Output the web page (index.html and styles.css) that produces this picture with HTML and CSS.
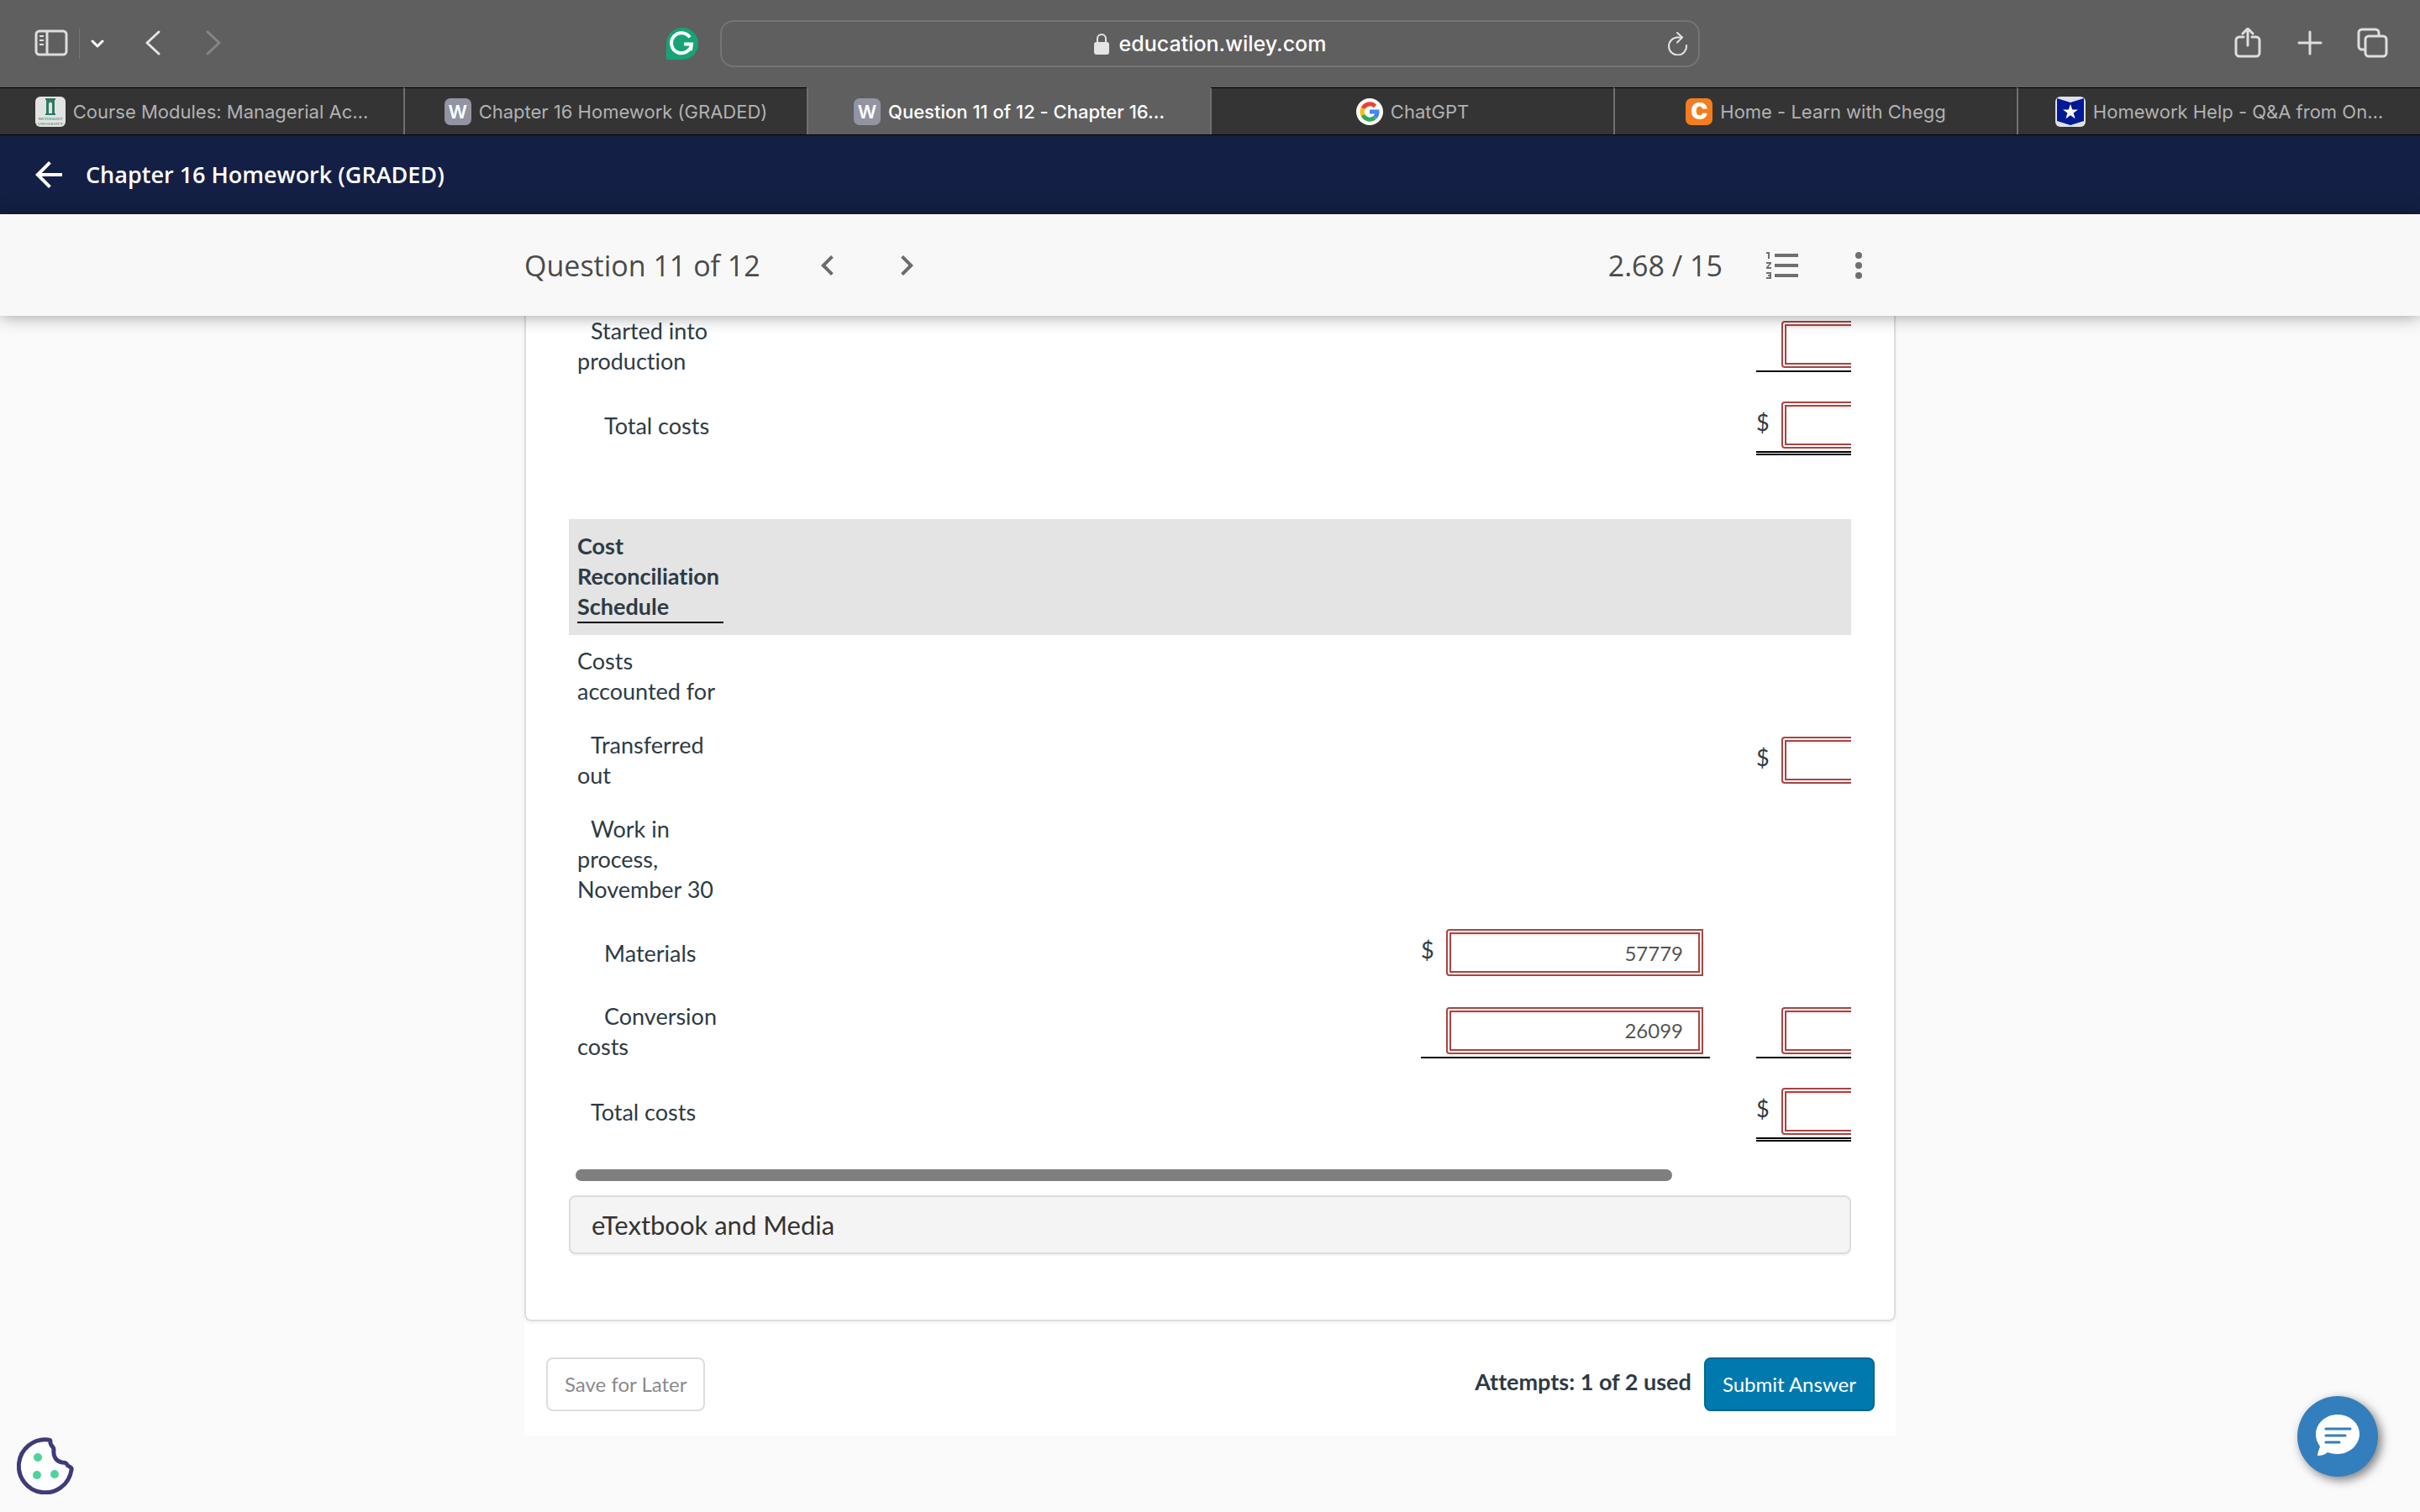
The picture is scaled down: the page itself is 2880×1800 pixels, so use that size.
FILE: index.html
```html
<!DOCTYPE html>
<html lang="en">
<head>
    <meta charset="UTF-8">
    <meta name="viewport" content="width=device-width, initial-scale=1.0">
    <title>Question 11 of 12 - Chapter 16 Homework (GRADED)</title>
    <link rel="stylesheet" href="styles.css">
</head>
<body>
    <!-- browser toolbar -->
    <div class="toolbar">
        <div class="toolbar-left">
            <button type="button" class="tool" aria-label="Sidebar">
                <svg class="icon-40" viewBox="0 0 40 40" fill="none" stroke="#dedede" stroke-width="3">
                    <rect x="2" y="5" width="36" height="28" rx="4"/>
                    <path d="M15 5v28"/>
                    <path d="M6 11h5M6 16h5M6 21h5" stroke-width="2"/>
                </svg>
            </button>
            <span class="tool-divider"></span>
            <button type="button" class="tool tool-menu" aria-label="Tab groups">
                <svg class="icon-16" viewBox="0 0 16 16" fill="none" stroke="#fff" stroke-width="3" stroke-linecap="round" stroke-linejoin="round"><path d="M2 5l6 6 6-6"/></svg>
            </button>
            <button type="button" class="tool tool-back" aria-label="Back">
                <svg class="icon-32" viewBox="0 0 32 32" fill="none" stroke="#e4e4e4" stroke-width="3" stroke-linecap="round" stroke-linejoin="round"><path d="M23 2L9 15l14 13"/></svg>
            </button>
            <button type="button" class="tool tool-forward" aria-label="Forward">
                <svg class="icon-32" viewBox="0 0 32 32" fill="none" stroke="#858585" stroke-width="3" stroke-linecap="round" stroke-linejoin="round"><path d="M9 2l14 13L9 28"/></svg>
            </button>
            <button type="button" class="tool tool-grammarly" aria-label="Grammarly">
                <svg class="icon-38" viewBox="0 0 38 38">
                    <path fill="#15a478" d="M19 0a19 19 0 1 1 0 38H0V19A19 19 0 0 1 19 0z"/>
                    <path fill="none" stroke="#fff" stroke-width="4" d="M28 11.500A12 12 0 1 0 30 19.500H21M30 19l-1 8"/>
                </svg>
            </button>
        </div>
        <div class="address">
            <svg class="lock" viewBox="0 0 18 26"><path fill="none" stroke="#e4e4e4" stroke-width="2" d="M4 12V7a5 5 0 0 1 10 0v5"/><rect x="0" y="11" width="18" height="15" rx="3" fill="#e4e4e4"/></svg>
            <span>education.wiley.com</span>
            <button type="button" class="reload" aria-label="Reload">
                <svg class="icon-28" viewBox="0 0 28 28" fill="none" stroke="#e4e4e4" stroke-width="2" stroke-linecap="round" stroke-linejoin="round"><path d="M24 16a10.500 10.500 0 1 1-10.500-9.500h5"/><path d="M13 1l6 5.500-6 6"/></svg>
            </button>
        </div>
        <div class="toolbar-right">
            <button type="button" class="tool" aria-label="Share">
                <svg class="icon-38" viewBox="0 0 38 38" fill="none" stroke="#dedede" stroke-width="3" stroke-linecap="round" stroke-linejoin="round"><path d="M14 11H9a4 4 0 0 0-4 4v15a4 4 0 0 0 4 4h20a4 4 0 0 0 4-4V15a4 4 0 0 0-4-4h-5M19 21V1M13 7l6-6 6 6"/></svg>
            </button>
            <button type="button" class="tool" aria-label="New tab">
                <svg class="icon-38" viewBox="0 0 38 38" fill="none" stroke="#dedede" stroke-width="3" stroke-linecap="round"><path d="M19 5v26M6 18h26"/></svg>
            </button>
            <button type="button" class="tool" aria-label="Tab overview">
                <svg class="icon-38" viewBox="0 0 38 38" fill="none" stroke="#dedede" stroke-width="3" stroke-linejoin="round"><path d="M10 26H7a4 4 0 0 1-4-4V6a4 4 0 0 1 4-4h16a4 4 0 0 1 4 4v4"/><rect x="11" y="10" width="25" height="24" rx="4"/></svg>
            </button>
        </div>
    </div>

    <nav class="tabs" aria-label="Open tabs">
        <a href="#" class="tab">
            <svg class="icon-36" viewBox="0 0 36 36">
                <rect width="36" height="36" rx="6" fill="#e2e4e3"/>
                <path fill="#2b7a62" d="M12 2h12v2h-1v16h1v2H12v-2h1V4h-1z"/>
                <path fill="#e2e4e3" d="M16 20V8q2-3 4 0v12z"/>
                <text x="18" y="28" class="crest">METHODIST</text>
                <text x="18" y="34" class="crest">UNIVERSITY</text>
            </svg>
            <span>Course Modules: Managerial Ac…</span>
        </a>
        <a href="#" class="tab">
            <b class="favicon favicon-w">W</b>
            <span>Chapter 16 Homework (GRADED)</span>
        </a>
        <a href="#" class="tab active" aria-current="page">
            <b class="favicon favicon-w">W</b>
            <span>Question 11 of 12 - Chapter 16…</span>
        </a>
        <a href="#" class="tab">
            <svg class="icon-32" viewBox="0 0 32 32">
                <circle cx="16" cy="16" r="16" fill="#fff"/>
                <g fill="none" stroke-width="5">
                    <path stroke="#ea4335" d="M8 12a9 9 0 0 1 14.500-2.500"/>
                    <path stroke="#fbbc05" d="M8 20a9 9 0 0 1 0-8"/>
                    <path stroke="#34a853" d="M22 23a9 9 0 0 1-14-3"/>
                    <path stroke="#4285f4" d="M16 16h9a9 9 0 0 1-3 7"/>
                </g>
            </svg>
            <span>ChatGPT</span>
        </a>
        <a href="#" class="tab">
            <b class="favicon favicon-c">C</b>
            <span>Home - Learn with Chegg</span>
        </a>
        <a href="#" class="tab">
            <svg class="icon-36" viewBox="0 0 36 36">
                <rect width="36" height="36" rx="6" fill="#dfe1ea"/>
                <path fill="#001a94" d="M2 2l16 5 16-5v27l-16 5-16-5z"/>
                <path fill="#fff" d="M18 9l2.300 6.500h6.700l-5.400 4.100 2 6.600-5.600-4-5.600 4 2-6.600L9 15.500h6.700z"/>
            </svg>
            <span>Homework Help - Q&amp;A from On…</span>
        </a>
    </nav>

    <!-- course bar -->
    <header class="course-bar">
        <a href="#" class="course-back" aria-label="Back to course">
            <svg class="icon-48" viewBox="0 0 24 24" fill="#fff"><path d="M20 11H7.830l5.590-5.590L12 4l-8 8 8 8 1.410-1.410L7.830 13H20v-2z"/></svg>
        </a>
        <h1>Chapter 16 Homework (GRADED)</h1>
    </header>

    <div class="question-bar">
        <div class="question-bar-inner">
            <h2>Question 11 of 12</h2>
            <button type="button" class="tool" aria-label="Previous question">
                <svg class="icon-48" viewBox="0 0 24 24" fill="#6b6b6b"><path d="M15.410 7.410L14 6l-6 6 6 6 1.410-1.410L10.830 12z"/></svg>
            </button>
            <button type="button" class="tool" aria-label="Next question">
                <svg class="icon-48" viewBox="0 0 24 24" fill="#6b6b6b"><path d="M10 6L8.590 7.410 13.170 12l-4.580 4.590L10 18l6-6z"/></svg>
            </button>
            <div class="question-tools">
                <span class="score">2.68 / 15</span>
                <button type="button" class="tool" aria-label="Question list">
                    <svg class="icon-48" viewBox="0 0 24 24" fill="#6f6f6f"><path d="M2 17h2v.5H3v1h1v.5H2v1h3v-4H2v1zm1-9h1V4H2v1h1v3zm-1 3h1.800L2 13.100v.9h3v-1H3.200L5 10.900V10H2v1zm5-6v2h14V5H7zm0 14h14v-2H7v2zm0-6h14v-2H7v2z"/></svg>
                </button>
                <button type="button" class="tool" aria-label="More options">
                    <svg class="icon-48" viewBox="0 0 24 24" fill="#6f6f6f"><circle cx="12" cy="6" r="2"/><circle cx="12" cy="12" r="2"/><circle cx="12" cy="18" r="2"/></svg>
                </button>
            </div>
        </div>
    </div>

    <main class="content">
        <section class="card">
            <div class="table-scroll">
                <table class="report">
                    <colgroup>
                        <col class="col-label">
                        <col class="col-hidden">
                        <col class="col-entry">
                        <col class="col-gap">
                        <col class="col-entry">
                    </colgroup>
                    <tbody>
                        <tr class="first">
                            <th scope="row" class="indent-1">Started into production</th>
                            <td></td>
                            <td></td>
                            <td></td>
                            <td><div class="entry line"><span class="sign"></span><input type="text" aria-label="Started into production"></div></td>
                        </tr>
                        <tr>
                            <th scope="row" class="indent-2">Total costs</th>
                            <td></td>
                            <td></td>
                            <td></td>
                            <td class="total"><div class="entry double"><span class="sign">$</span><input type="text" aria-label="Total costs"></div></td>
                        </tr>
                        <tr>
                            <td colspan="5">&nbsp;</td>
                        </tr>
                        <tr class="heading">
                            <th scope="row"><div class="underlined">Cost Reconciliation Schedule</div></th>
                            <td colspan="4"></td>
                        </tr>
                        <tr>
                            <th scope="row">Costs accounted for</th>
                            <td colspan="4"></td>
                        </tr>
                        <tr>
                            <th scope="row" class="indent-1">Transferred out</th>
                            <td></td>
                            <td></td>
                            <td></td>
                            <td><div class="entry"><span class="sign">$</span><input type="text" aria-label="Transferred out"></div></td>
                        </tr>
                        <tr>
                            <th scope="row" class="indent-1">Work in process, November 30</th>
                            <td colspan="4"></td>
                        </tr>
                        <tr>
                            <th scope="row" class="indent-2">Materials</th>
                            <td></td>
                            <td><div class="entry"><span class="sign">$</span><input type="text" value="57779" aria-label="Materials"></div></td>
                            <td></td>
                            <td></td>
                        </tr>
                        <tr>
                            <th scope="row" class="indent-2">Conversion costs</th>
                            <td></td>
                            <td><div class="entry line"><span class="sign"></span><input type="text" value="26099" aria-label="Conversion costs"></div></td>
                            <td></td>
                            <td><div class="entry line"><span class="sign"></span><input type="text" aria-label="Work in process total"></div></td>
                        </tr>
                        <tr>
                            <th scope="row" class="indent-1">Total costs</th>
                            <td></td>
                            <td></td>
                            <td></td>
                            <td class="total"><div class="entry double"><span class="sign">$</span><input type="text" aria-label="Total costs accounted for"></div></td>
                        </tr>
                    </tbody>
                </table>
            </div>
            <div class="scroll-track"><div class="scroll-thumb"></div></div>
            <button type="button" class="etextbook">eTextbook and Media</button>
        </section>

        <footer class="actions">
            <button type="button" class="btn btn-save">Save for Later</button>
            <span class="attempts">Attempts: 1 of 2 used</span>
            <button type="submit" class="btn btn-submit">Submit Answer</button>
        </footer>
    </main>

    <button type="button" class="cookie" aria-label="Cookie settings">
        <svg viewBox="0 0 68 68">
            <path fill="#fff" stroke="#3f3a7a" stroke-width="5" stroke-linejoin="round" d="M37 3C40 3 40 3 40 7c1 4 4 4 4 8-1 8 3 14 10 15 6 0 4 1 7 4 3 2 5 2 4 5A31.500 31.500 0 1 1 37 3z"/>
            <circle cx="25" cy="24" r="5" fill="#4dd49c"/>
            <circle cx="24" cy="45" r="5" fill="#4dd49c"/>
            <circle cx="45" cy="44" r="5" fill="#4dd49c"/>
        </svg>
    </button>
    <button type="button" class="chat" aria-label="Chat">
        <svg class="icon-52" viewBox="0 0 52 52">
            <path fill="#fff" d="M26 0c14 0 26 10 26 23S40 47 26 47c-5 0-8-1-12-2-4 3-8 4-12 4 0-4 2-7 3-11-3-4-5-9-5-14C0 10 12 0 26 0z"/>
            <path stroke="#337fbd" stroke-width="3" stroke-linecap="round" d="M12 17h29M12 25h23M12 33h16"/>
        </svg>
    </button>
</body>
</html>
```

FILE: styles.css
```css
* {
    box-sizing: border-box;
}
body {
    margin: 0;
    min-height: 100vh;
    background-color: #fafafa;
    color: #2d3b45;
    font-family: Lato, "Liberation Sans", sans-serif;
    font-size: 27px;
    font-variant-ligatures: none;
    line-height: 36px;
}
button {
    font-family: inherit;
    cursor: pointer;
}
svg {
    display: block;
}
a {
    color: inherit;
    text-decoration: none;
}

/* icon sizes */
.icon-16 { width: 16px; height: 16px; }
.icon-28 { width: 28px; height: 28px; }
.icon-32 { width: 32px; height: 32px; }
.icon-36 { width: 36px; height: 36px; }
.icon-38 { width: 38px; height: 38px; }
.icon-40 { width: 40px; height: 40px; }
.icon-48 { width: 48px; height: 48px; }
.icon-52 { width: 52px; height: 52px; }

/* toolbar */
.toolbar {
    display: grid;
    grid-template-columns: 1fr minmax(0, 1166px) 1fr;
    align-items: center;
    height: 104px;
    background-color: #5f5f5f;
    font-family: Inter, sans-serif;
}
.toolbar-left,
.toolbar-right {
    display: flex;
    align-items: center;
}
.toolbar-left {
    padding: 0 26px 0 41px;
}
.toolbar-right {
    justify-content: flex-end;
    gap: 36px;
    padding-right: 38px;
}
.tool {
    flex: none;
    padding: 0;
    border: 0;
    background: none;
}
.tool-divider {
    width: 1px;
    height: 36px;
    margin: 0 13px;
    background-color: #757575;
}
.tool-back {
    margin-left: 42px;
}
.tool-forward {
    margin-left: 40px;
}
.tool-grammarly {
    margin-left: auto;
}
.address {
    display: flex;
    align-items: center;
    justify-content: center;
    gap: 12px;
    position: relative;
    height: 56px;
    border: 2px solid #757575;
    border-radius: 16px;
    color: #fff;
    font-size: 25px;
    font-weight: 500;
}
.lock {
    width: 18px;
    height: 26px;
}
.reload {
    position: absolute;
    right: 10px;
    padding: 0;
    border: 0;
    background: none;
}

/* tabs */
.tabs {
    display: grid;
    grid-template-columns: repeat(6, 1fr);
    height: 57px;
    border-bottom: 1px solid #000;
    background-color: #343434;
    color: #b2b2b2;
    font-family: Inter, sans-serif;
    font-size: 22px;
}
.tab {
    display: flex;
    align-items: center;
    justify-content: center;
    gap: 9px;
    min-width: 0;
    border-top: 1px solid #000;
    border-left: 2px solid #707070;
    white-space: nowrap;
}
.tab:first-child {
    border-left: 0;
}
.tab.active {
    border-top-color: #5f5f5f;
    background-color: #5f5f5f;
    color: #fff;
    font-weight: 500;
}
.crest {
    fill: #2b7a62;
    font-family: "Liberation Serif", serif;
    font-size: 5px;
    text-anchor: middle;
}
.favicon {
    width: 32px;
    height: 32px;
    border-radius: 7px;
    color: #fff;
    font-weight: 600;
    line-height: 32px;
    text-align: center;
}
.favicon-w {
    background-color: #9294a2;
}
.favicon-c {
    background-color: #f47d1f;
    font-size: 27px;
    font-weight: 900;
}

/* course bar */
.course-bar {
    display: flex;
    align-items: center;
    gap: 20px;
    height: 94px;
    padding-left: 34px;
    background-color: #141f45;
    color: #fff;
}
.course-bar h1 {
    margin: 0;
    font-family: "Open Sans", "Noto Sans", sans-serif;
    font-size: 27px;
    font-weight: 600;
}
.question-bar {
    position: relative;
    z-index: 1;
    background-color: #f8f8f8;
    box-shadow: 0 0 20px rgba(0, 0, 0, 0.4);
}
.question-bar-inner {
    display: flex;
    align-items: center;
    gap: 46px;
    width: 100%;
    max-width: 1632px;
    height: 121px;
    margin: 0 auto;
    padding-right: 20px;
    color: #4a4a4a;
    font-family: "Open Sans", "Noto Sans", sans-serif;
    font-size: 34px;
}
.question-bar h2 {
    margin: 0;
    padding-right: 10px;
    font-size: inherit;
    font-weight: 400;
}
.question-tools {
    display: flex;
    align-items: center;
    gap: 42px;
    margin-left: auto;
}
.score {
    padding-right: 6px;
}

/* question */
.content {
    max-width: 1632px;
    margin: 0 auto;
    background-color: #fff;
}
.card {
    padding: 0 51px 78px;
    border: 2px solid #ddd;
    border-top: 0;
    border-radius: 0 0 8px 8px;
    box-shadow: 0 2px 4px rgba(0, 0, 0, 0.06);
}
.table-scroll {
    overflow: hidden;
}
.report {
    width: 1767px;
    border-collapse: collapse;
    table-layout: fixed;
}
.col-label { width: 194px; }
.col-hidden { width: 810px; }
.col-entry { width: 364px; }
.col-gap { width: 35px; }
.report th,
.report td {
    padding: 14px 10px;
    font-weight: 400;
    text-align: left;
    vertical-align: middle;
}
.report th {
    padding: 13px 10px 15px;
}
.report .first th,
.report .first td {
    padding-top: 0;
    padding-bottom: 14px;
}
.report .total {
    padding: 16px 10px 12px;
}
.report .indent-1 {
    text-indent: 16px;
}
.report .indent-2 {
    text-indent: 32px;
}
.report .heading {
    background-color: #e4e4e4;
}
.report .heading th {
    padding: 14px 10px;
    font-weight: 700;
}
.underlined {
    border-bottom: 2px solid #000;
}
.entry {
    display: flex;
    align-items: center;
    padding-bottom: 3px;
}
.entry.line {
    border-bottom: 2px solid #000;
}
.entry.double {
    border-bottom: 5px double #000;
}
.sign {
    flex: none;
    width: 30px;
    padding-bottom: 6px;
}
.entry input {
    width: 306px;
    height: 56px;
    padding: 0 18px;
    border: 6px double #a94442;
    border-radius: 4px 0 0 4px;
    background-color: #fff;
    box-shadow: inset 0 2px 2px rgba(0, 0, 0, 0.075);
    color: #555;
    font-family: inherit;
    font-size: 24px;
    text-align: right;
}
.scroll-track {
    padding: 21px 8px 17px;
}
.scroll-thumb {
    width: 86.4%;
    height: 14px;
    border-radius: 7px;
    background-color: #7f7f7f;
}
.etextbook {
    display: block;
    width: 100%;
    height: 70px;
    padding: 0 25px;
    border: 2px solid #ddd;
    border-radius: 8px;
    background-color: #f4f4f4;
    box-shadow: 0 2px 2px rgba(0, 0, 0, 0.05);
    color: #333;
    font-size: 31px;
    text-align: left;
}

/* actions */
.actions {
    display: flex;
    align-items: center;
    gap: 15px;
    padding: 43px 25px 29px 26px;
}
.attempts {
    margin-left: auto;
    padding-bottom: 6px;
    font-weight: 700;
}
.btn {
    height: 64px;
    padding: 0 20px 2px;
    border: 2px solid #ddd;
    border-radius: 8px;
    font-size: 24px;
}
.btn-save {
    background-color: #fff;
    color: #8a8a8a;
}
.btn-submit {
    border-color: #00678f;
    background-color: #007aae;
    color: #fff;
}

/* floating buttons */
.cookie {
    position: fixed;
    left: 20px;
    bottom: 21px;
    width: 68px;
    height: 68px;
    padding: 0;
    border: 0;
    background: none;
}
.chat {
    display: flex;
    align-items: center;
    justify-content: center;
    position: fixed;
    right: 50px;
    bottom: 42px;
    width: 96px;
    height: 96px;
    padding: 0;
    border: 0;
    border-radius: 50%;
    background-color: #337fbd;
    box-shadow: 4px 4px 12px rgba(0, 0, 0, 0.5);
}
```
